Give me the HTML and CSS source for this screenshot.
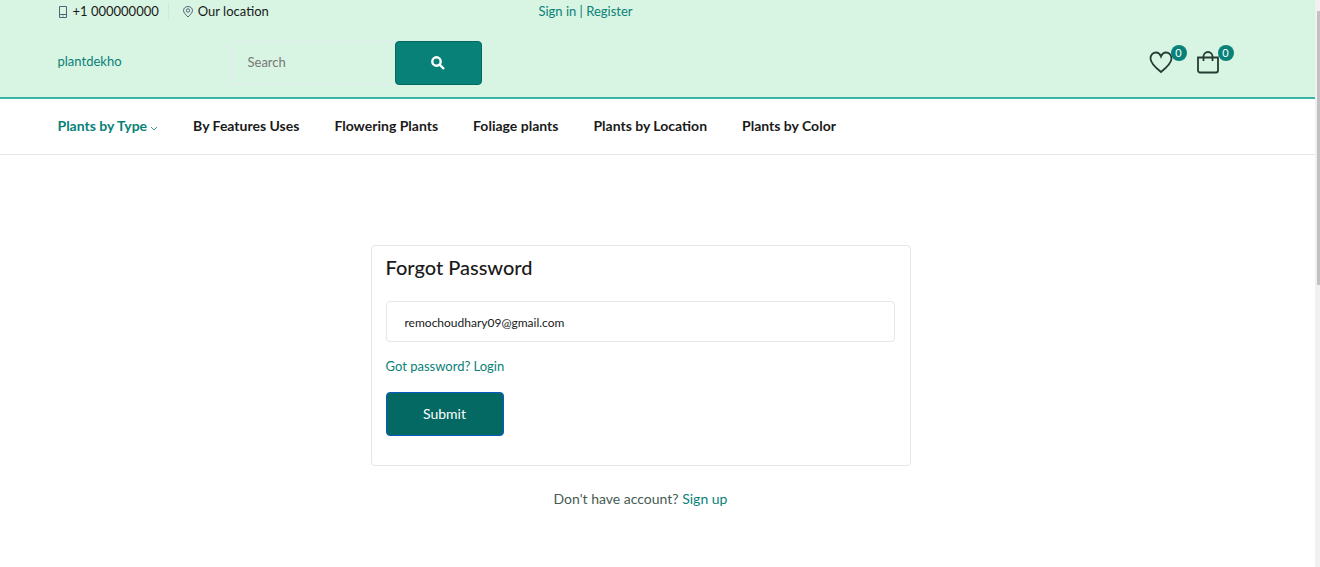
FILE: index.html
```html
<!DOCTYPE html>
<html lang="en">
<head>
<meta charset="utf-8">
<title>Forgot Password</title>
<link rel="stylesheet" href="styles.css">
</head>
<body>
<div class="page">
  <header class="header">
    <div class="container topbar">
      <ul class="contact">
        <li><svg class="contact-icon" viewBox="0 0 10 12"><path d="M1.500.5h7v11h-7zM1.500 8.500h7M4.500 10h1"/></svg>+1 000000000</li>
        <li><svg class="contact-icon" viewBox="0 0 10 12"><path d="M5 11C2.500 8.500.5 6.500.5 4.500a4.500 4 0 0 1 9 0C9.500 6.500 7.500 8.500 5 11z"/><circle cx="5" cy="4.500" r="1.700"/></svg><a class="dark" href="#">Our location</a></li>
      </ul>
      <div class="account"><a href="#">Sign in</a> | <a href="#">Register</a></div>
    </div>
    <div class="container mainbar">
      <a class="logo" href="#">plantdekho</a>
      <form class="search">
        <input class="search-input" type="text" placeholder="Search" aria-label="Search">
        <button class="search-button" type="button" aria-label="Search"><svg width="14" height="14" viewBox="0 0 14 14"><circle cx="5.500" cy="5.500" r="4.200"/><path d="M8.800 8.800l4.200 4.200"/></svg></button>
      </form>
      <div class="actions">
        <a class="action" href="#" aria-label="Wishlist"><svg width="24" height="24" viewBox="0 0 24 24"><path d="M12 22C7 18 1.500 13.500 1.500 8.500C1.500 5 4 2.500 7 2.500C9.500 2.500 11 4 12 6.500C13 4 14.500 2.500 17 2.500C20 2.500 22.500 5 22.500 8.500C22.500 13.500 17 18 12 22z"/></svg><span class="badge">0</span></a>
        <a class="action" href="#" aria-label="Cart"><svg width="24" height="24" viewBox="0 0 24 24"><path d="M2 7.500h20v13a2 2 0 0 1-2 2H4a2 2 0 0 1-2-2zM7.500 11V6.500a4.500 4.500 0 0 1 9 0V11"/></svg><span class="badge">0</span></a>
      </div>
    </div>
  </header>
  <nav class="nav">
    <div class="container nav-list">
      <a class="active" href="#">Plants by Type<svg class="chevron" viewBox="0 0 8 5"><path d="M1 1l3 3 3-3"/></svg></a>
      <a href="#">By Features Uses</a>
      <a href="#">Flowering Plants</a>
      <a href="#">Foliage plants</a>
      <a href="#">Plants by Location</a>
      <a href="#">Plants by Color</a>
    </div>
  </nav>
  <main class="main">
    <form class="card">
      <h1 class="title">Forgot Password</h1>
      <input class="email" type="email" value="remochoudhary09@gmail.com" aria-label="Email">
      <a class="login" href="#">Got password? Login</a>
      <button class="submit" type="button">Submit</button>
    </form>
    <p class="signup">Don't have account? <a href="#">Sign up</a></p>
  </main>
</div>
<div class="scrollbar"><div class="thumb"></div></div>
</body>
</html>
```
FILE: styles.css
```css
* { box-sizing: border-box; }
body {
  margin: 0;
  display: flex;
  min-height: 100vh;
  background: #fff;
  color: #1a1a1a;
  font: 14px/24px Lato, "Open Sans", sans-serif;
}
a { color: #088178; text-decoration: none; }
svg { fill: none; stroke: currentColor; }
button, input { font-family: inherit; }
.page { flex: 1; min-width: 0; }
.container { max-width: 1200px; margin: 0 auto; }
.header {
  background: #d8f4e2;
  border-bottom: 2px solid #3bb4a8;
}
.topbar {
  display: grid;
  grid-template-columns: 37% 14%;
  padding-bottom: 6px;
  font-size: 13px;
  line-height: 23px;
}
.contact { display: flex; margin: 0; padding: 0; list-style: none; }
.contact li { display: flex; align-items: center; gap: 5px; }
.contact li + li { position: relative; margin-left: 9px; padding-left: 15px; }
.contact li + li::before {
  content: "";
  position: absolute;
  left: 0;
  top: 3px;
  width: 1px;
  height: 17px;
  background: #d5e6e0;
}
.contact-icon { width: 10px; height: 12px; color: #536276; }
.dark { color: #1a1a1a; }
.account { text-align: center; color: #088178; }
.mainbar { display: flex; align-items: center; height: 68px; padding-bottom: 2px; }
.logo { width: 173px; padding-bottom: 2px; font-size: 13px; }
.search { display: flex; width: 251px; height: 44px; margin-top: 2px; }
.search-input {
  flex: 1;
  min-width: 0;
  padding: 0 16px 2px;
  border: 1px solid #e6eaf2;
  border-right: 0;
  border-radius: 4px 0 0 4px;
  background: transparent;
  font-size: 13px;
}
.search-input::placeholder { color: #777; }
.search-button {
  width: 87px;
  border: 1px solid #046963;
  border-radius: 4px;
  background: #088178;
  color: #fff;
}
.search-button svg { display: block; margin: auto; stroke-width: 2.4; }
.actions { display: flex; gap: 23px; margin-left: auto; margin-right: 38px; padding-bottom: 1px; }
.action { position: relative; display: flex; color: #253d33; }
.action svg { stroke-width: 1.800; }
.badge {
  position: absolute;
  left: 22px;
  top: -5px;
  width: 16px;
  height: 16px;
  border-radius: 50%;
  background: #088178;
  color: #fff;
  font-size: 11px;
  line-height: 16px;
  text-align: center;
}
.nav { border-bottom: 1px solid #e2e9e1; }
.nav-list {
  display: flex;
  gap: 35px;
  padding-bottom: 2px;
  font-size: 14px;
  font-weight: 700;
  line-height: 53px;
}
.nav-list a { color: #1a1a1a; }
.nav-list .active { color: #088178; }
.chevron { width: 8px; height: 5px; margin-left: 3px; opacity: .8; }
.main { padding: 90px 34px 0 0; }
.card {
  display: flex;
  flex-direction: column;
  align-items: flex-start;
  max-width: 540px;
  margin: 0 auto;
  padding: 9px 15px 29px 14px;
  border: 1px solid #e2e9e1;
  border-radius: 4px;
}
.title { margin: 0 0 22px; font-size: 20px; font-weight: 500; line-height: 24px; }
.email {
  width: 100%;
  height: 41px;
  padding: 1px 18px 0;
  border: 1px solid #e2e9e1;
  border-radius: 4px;
  color: #1a1a1a;
  font-size: 12px;
}
.login { margin: 12px 0 14px; font-size: 13px; }
.submit {
  width: 118px;
  height: 44px;
  padding: 0 0 2px;
  border: 1px solid #0b5ac2;
  border-radius: 4px;
  background: #046963;
  color: #fff;
  font-size: 14px;
}
.signup { margin: 21px 0 0; color: #465b52; text-align: center; }
.scrollbar { width: 5px; padding: 11px 0 0 2px; background: #f1f1f1; }
.thumb { height: 274px; background: #c1c1c1; }
```
